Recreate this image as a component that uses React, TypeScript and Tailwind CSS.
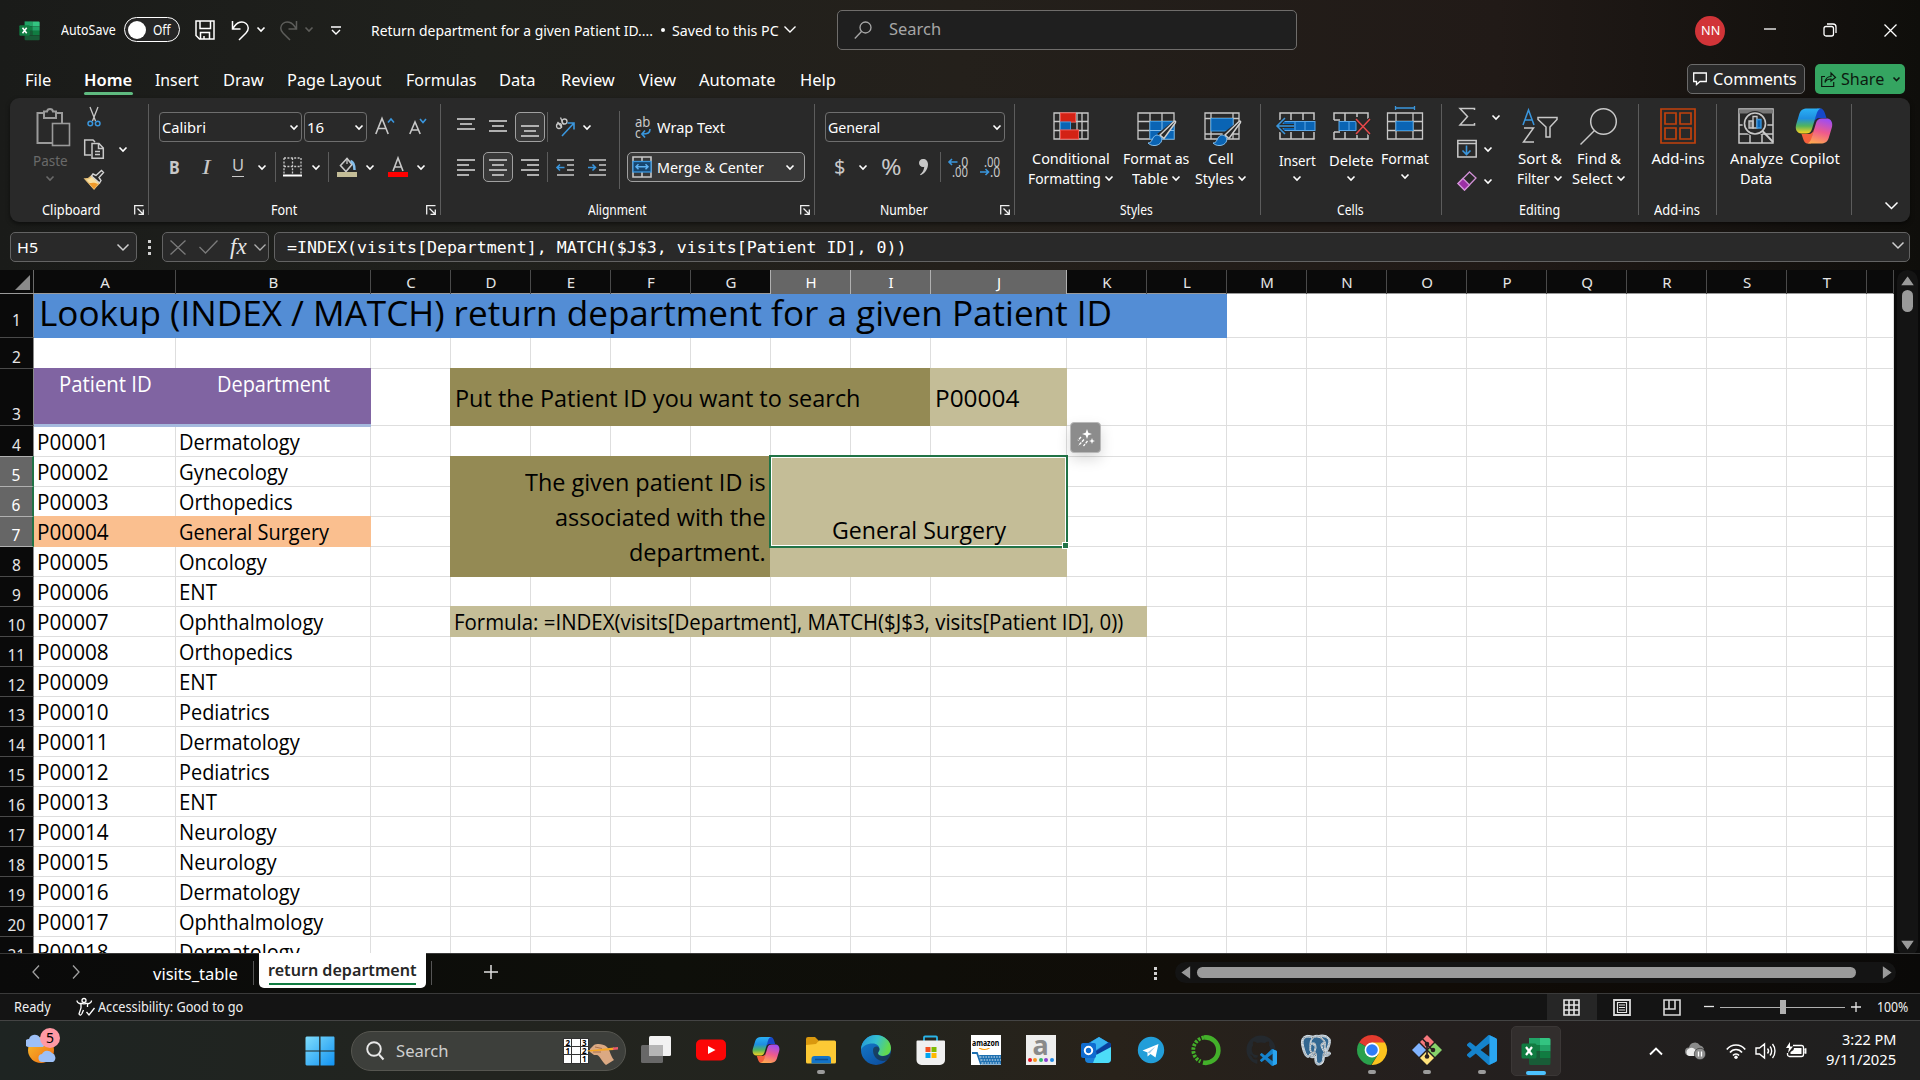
import React, { useLayoutEffect, useRef, useState } from "react";
import { BiLogoPostgresql } from "react-icons/bi";
import { FaGithub } from "react-icons/fa";

/* Text set to an exact advance width, condensed or expanded as needed. */
function Fit({ w, className = "", children }: { w: number; className?: string; children: React.ReactNode }) {
  const ref = useRef<HTMLSpanElement>(null);
  const [s, setS] = useState(1);
  useLayoutEffect(() => {
    const n = ref.current?.offsetWidth;
    if (n) setS(w / n);
  }, [w]);
  return (
    <span className={"block shrink-0 whitespace-nowrap " + className} style={{ width: w }}>
      <span ref={ref} className="inline-block origin-left" style={{ transform: `scaleX(${s})` }}>
        {children}
      </span>
    </span>
  );
}

type SvgProps = { w: number; h: number; className?: string; children: React.ReactNode };
function Ic({ w, h, className = "", children }: SvgProps) {
  return (
    <svg width={w} height={h} viewBox={`0 0 ${w} ${h}`} fill="none" stroke="#c8c8c8" strokeWidth="1.3" className={"block shrink-0 overflow-visible " + className}>
      {children}
    </svg>
  );
}

function Chev({ className = "", w = 8, stroke = "#ffffff", sw = 1.6 }: { className?: string; w?: number; stroke?: string; sw?: number }) {
  return (
    <Ic w={w} h={w / 2 + 1} className={className}>
      <path d={`M.5 .5 L${w / 2} ${w / 2} L${w - 0.5} .5`} stroke={stroke} strokeWidth={sw} />
    </Ic>
  );
}

function ExcelLogo({ size, className = "" }: { size: number; className?: string }) {
  return (
    <svg width={size} height={size} viewBox="0 0 30 30" className={"block shrink-0 " + className}>
      <path d="M8 2h11v7H8z" fill="#21a366" />
      <path d="M19 2h9a1.5 1.5 0 0 1 1.5 1.5V9H19z" fill="#33c481" />
      <path d="M8 9h11v6.500H8z" fill="#107c41" />
      <path d="M19 9h10.500v6.500H19z" fill="#21a366" />
      <path d="M8 15.500h11V22H8z" fill="#185c37" />
      <path d="M19 15.500h10.500V22H19z" fill="#107c41" />
      <path d="M8 22h21.500v5.500A1.500 1.500 0 0 1 28 29H9.500A1.500 1.500 0 0 1 8 27.500z" fill="#185c37" />
      <rect x="0.500" y="7.500" width="15" height="15" rx="1.500" fill="#107c41" />
      <path d="M5 11l6 8M11 11l-6 8" stroke="#fff" strokeWidth="2.200" />
    </svg>
  );
}

function CopilotLogo({ size, id }: { size: number; id: string }) {
  return (
    <svg width={size} height={size} viewBox="0 0 38 38" className="block shrink-0">
      <defs>
        <linearGradient id={id + "a"} x1="0" y1="0" x2="0" y2="1">
          <stop offset="0" stopColor="#2ab0f5" />
          <stop offset="0.400" stopColor="#1f8fe0" />
          <stop offset="0.700" stopColor="#52b45c" />
          <stop offset="1" stopColor="#ffd21f" />
        </linearGradient>
        <linearGradient id={id + "b"} x1="0.600" y1="0" x2="0.300" y2="1">
          <stop offset="0" stopColor="#a04df0" />
          <stop offset="0.500" stopColor="#ef5a8c" />
          <stop offset="1" stopColor="#ffa850" />
        </linearGradient>
      </defs>
      <path d="M22 1.500h3c3 0 4 2 5 5l1.500 4.500h-7c-3 0-4.500 1.500-5.500 5z" fill="#1648c8" />
      <path d="M16 36.500h-3c-3 0-4-2-5-5L6.500 27h7c3 0 4.500-1.500 5.500-5z" fill="#f4603c" />
      <path d="M12.500 1.500H27c-3 0-4.500 2-5.500 5.500l-4.500 15c-1 3-2.500 4.500-6 4.500H6.500C1.500 26.500-.2 22 1.300 17l3-10C5.500 3.200 8 1.500 12.500 1.500z" fill={`url(#${id}a)`} />
      <path d="M25.500 36.500H11c3 0 4.500-2 5.500-5.500l4.500-15c1-3 2.500-4.500 6-4.500h4.500c5 0 6.700 4.500 5.200 9.500l-3 10c-1.200 3.800-3.700 5.500-8.200 5.500z" fill={`url(#${id}b)`} />
    </svg>
  );
}

function TitleBar() {
  return (
    <div className="flex h-[60px] w-full shrink-0 items-center pt-px text-[14.5px] leading-[20px]">
      <ExcelLogo size={21} className="ml-[19px]" />
      <Fit w={55} className="-mt-[2px] ml-[21px] text-[14px]">AutoSave</Fit>
      <div className="-mt-[2px] ml-[8px] flex h-[25px] w-[56px] items-center rounded-full border border-white bg-[#262626]">
        <div className="ml-[3px] size-[18px] rounded-full bg-white" />
        <Fit w={18} className="ml-[7px] text-[14px]">Off</Fit>
      </div>
      <Ic w={20} h={20} className="-mt-px ml-[15px]">
        <path d="M1 1h18v18H4.500L1 15.500zM5 1v7.500h10.500V1M5.500 19v-6.500h9V19M9 19v-3" stroke="#fff" strokeWidth="1.500" />
      </Ic>
      <Ic w={19} h={21} className="-mt-px ml-[16px]">
        <path d="M1.500 1v8h8M2 8.500C6 1 12 1 15 3.500c3 2.500 3 6.500 0 9.500l-7 7" stroke="#fff" strokeWidth="1.500" />
      </Ic>
      <Chev className="-mt-[2px] ml-[7px]" w={8} />
      <Ic w={19} h={21} className="-mt-px ml-[14px]">
        <path d="M17.500 1v8h-8M17 8.500C13 1 7 1 4 3.500c-3 2.500-3 6.500 0 9.500l7 7" stroke="#5d5d5a" strokeWidth="1.500" />
      </Ic>
      <Chev className="-mt-[2px] ml-[7px]" w={8} stroke="#5d5d5a" />
      <Ic w={10} h={9} className="ml-[18px]">
        <path d="M0 1h10M1 4l4 4 4-4" stroke="#fff" strokeWidth="1.400" />
      </Ic>
      <Fit w={282} className="-mt-[2px] ml-[30px]">Return department for a given Patient ID....</Fit>
      <span className="-mt-px ml-[8px] size-[4px] rounded-full bg-white" />
      <Fit w={107} className="-mt-[2px] ml-[7px]">Saved to this PC</Fit>
      <Chev className="-mt-[2px] ml-[5px]" w={12} sw={1.4} />
      <div className="-mt-px ml-[41px] flex h-[40px] w-[460px] items-center rounded-[5px] border border-[#6f6d6b] bg-[#1f1f1f]">
        <Ic w={18} h={18} className="-mt-px ml-[16px]">
          <circle cx="11.500" cy="6.500" r="5.500" stroke="#a8a8a8" />
          <path d="M7.500 10.500L.8 17.500" stroke="#a8a8a8" />
        </Ic>
        <Fit w={52} className="-mt-[2px] ml-[17px] text-[15.500px] text-[#a6a6a6]">Search</Fit>
      </div>
      <div className="ml-[398px] flex size-[30px] items-center justify-center rounded-full bg-[#d13438]">
        <Fit w={19} className="text-[12px] leading-[16px]">NN</Fit>
      </div>
      <Ic w={12} h={2} className="-mt-[3px] ml-[39px]"><path d="M0 1h12" stroke="#fff" /></Ic>
      <Ic w={14} h={14} className="-mt-px ml-[47px]">
        <rect x="1" y="3.500" width="9.500" height="9.500" rx="2" stroke="#fff" />
        <path d="M4 1h6a3 3 0 0 1 3 3v6" stroke="#fff" />
      </Ic>
      <Ic w={13} h={13} className="-mt-px ml-[47px]"><path d="M.5.5l12 12M12.500.5l-12 12" stroke="#fff" /></Ic>
    </div>
  );
}

function MenuBar() {
  return (
    <div className="flex h-[38px] w-full shrink-0 items-start text-[16.500px] leading-[40px]">
      <Fit w={26} className="ml-[25px]">File</Fit>
      <div className="ml-[33px] h-[38px]">
        <Fit w={48} className="h-[32px] font-semibold">Home</Fit>
        <div className="h-[3px] w-[49px] rounded-full bg-[#5fbb80]" />
      </div>
      <Fit w={44} className="ml-[22px]">Insert</Fit>
      <Fit w={41} className="ml-[24px]">Draw</Fit>
      <Fit w={94} className="ml-[23px]">Page Layout</Fit>
      <Fit w={70} className="ml-[25px]">Formulas</Fit>
      <Fit w={37} className="ml-[23px]">Data</Fit>
      <Fit w={54} className="ml-[25px]">Review</Fit>
      <Fit w={37} className="ml-[24px]">View</Fit>
      <Fit w={77} className="ml-[23px]">Automate</Fit>
      <Fit w={36} className="ml-[24px]">Help</Fit>
      <div className="ml-[851px] mt-[4px] flex h-[30px] w-[118px] items-center rounded-[5px] border border-[#6b6b6b] bg-[#292929] leading-[28px]">
        <Ic w={14} h={14} className="ml-[5px] mt-[-1px]"><path d="M.7 1h12.600v8.500H7l-3.500 3v-3H.7z" stroke="#fff" /></Ic>
        <Fit w={84} className="ml-[6px]">Comments</Fit>
      </div>
      <div className="ml-[10px] mt-[4px] flex h-[30px] w-[90px] items-center rounded-[5px] bg-[#35a561] leading-[28px] text-[#0c1a10]">
        <Ic w={15} h={15} className="ml-[6px]">
          <path d="M4 4.500H.7v10h12V10M4 10.500c.5-4 3-6 6-6V1l4.500 4.500L10 9V7c-3 0-5 1-6 3.500z" stroke="#0c1a10" strokeWidth="1.200" />
        </Ic>
        <Fit w={43} className="ml-[5px]">Share</Fit>
        <Chev className="ml-[9px]" w={7} stroke="#0c1a10" />
      </div>
    </div>
  );
}

const Sep = () => <div className="mt-[6px] h-[111px] w-px shrink-0 bg-[#5c5c5c]" />;
const SmallSep = () => <div className="h-[30px] w-px shrink-0 bg-[#5c5c5c]" />;

function Launcher({ className = "" }: { className?: string }) {
  return (
    <Ic w={10} h={10} className={className}>
      <path d="M.7 9.500V.7H9.500M3.500 3.500l5.500 5.500M9.300 4.500v4.800H4.500" stroke="#f0f0f0" strokeWidth="1.300" />
    </Ic>
  );
}

function GroupShell({ className, label, children }: { className: string; label: React.ReactNode; children: React.ReactNode }) {
  return (
    <div className={"flex h-[124px] shrink-0 flex-col " + className}>
      <div className="flex h-[100px] w-full">{children}</div>
      <div className="flex h-[24px] w-full items-center text-[13.500px] leading-[22px]">{label}</div>
    </div>
  );
}

function Clipboard() {
  return (
    <GroupShell className="w-[138px]" label={<><Fit w={58} className="ml-[32px]">Clipboard</Fit><Launcher className="ml-[34px]" /></>}>
      <div className="flex w-[80px] shrink-0 flex-col items-center pt-[10px]">
        <Ic w={34} h={38} className="ml-[6px]">
          <path d="M8 5H1.500v30H16M19 5h7v10M8 3.500h3c.5-3.500 5.500-3.500 6 0h3V10H8z" stroke="#9a9a9a" strokeWidth="2" />
          <rect x="16.500" y="15.500" width="17" height="22" stroke="#9a9a9a" strokeWidth="1.600" />
        </Ic>
        <Fit w={35} className="mt-[4px] text-[15px] leading-[20px] text-[#6a6a6a]">Paste</Fit>
        <Chev w={8} stroke="#6a6a6a" className="mt-[6px]" />
      </div>
      <div className="ml-[-6px] flex w-[20px] shrink-0 flex-col pt-[9px]">
        <Ic w={20} h={20}>
          <path d="M6 0l5.500 14M14 0L8.500 14" />
          <circle cx="6.300" cy="16.500" r="2.300" stroke="#3a96dd" strokeWidth="1.500" />
          <circle cx="13.700" cy="16.500" r="2.300" stroke="#3a96dd" strokeWidth="1.500" />
        </Ic>
        <Ic w={20} h={20} className="mt-[12px]">
          <path d="M7 16H.7V1H9l2 2M8 19.300V4.500h7l4.300 4.500v10.300zM14.500 4.500V9.500h5M11 12.500h5M11 15.500h5" strokeWidth="1.500" />
        </Ic>
        <Ic w={20} h={20} className="mt-[11px]">
          <path d="M1 9c2.500 0 5-1 6.500-3l8 7c-2 2-4 4-5.500 6z" fill="#f9e0a0" stroke="#e9c27a" />
          <path d="M5 13c3 0 5-1 9 1l-4 5z" fill="#f09a2a" stroke="none" />
          <path d="M7.500 6l1.500-2 3 1.500L17.500.500l2 2-4.500 5 2 3-1.500 2.500z" fill="#292929" stroke="#d5d5d5" strokeWidth="1.400" />
        </Ic>
      </div>
      <Chev className="ml-[15px] mt-[49px]" w={8} />
    </GroupShell>
  );
}

function FontGroup() {
  return (
    <GroupShell className="w-[291px]" label={<><Fit w={26} className="ml-[122px]">Font</Fit><Launcher className="ml-[129px]" /></>}>
      <div className="ml-[10px] flex flex-col gap-[10px] pt-[14px]">
        <div className="flex h-[30px] items-center text-[15px] leading-[20px]">
          <div className="flex h-[30px] w-[143px] items-center rounded-[4px] border border-[#6e6e6e]">
            <Fit w={44} className="ml-[2px]">Calibri</Fit>
            <Chev className="ml-auto mr-[3px]" w={8} />
          </div>
          <div className="ml-[2px] flex h-[30px] w-[63px] items-center rounded-[4px] border border-[#6e6e6e]">
            <Fit w={17} className="ml-[2px]">16</Fit>
            <Chev className="ml-auto mr-[3px]" w={8} />
          </div>
          <Ic w={19} h={18} className="ml-[8px] mt-[-3px]">
            <path d="M.8 17L7 1.500 13.200 17M3 11.500h8" strokeWidth="1.600" />
            <path d="M13 5.500L16 2l3 3.500" stroke="#3a96dd" strokeWidth="1.600" />
          </Ic>
          <Ic w={18} h={18} className="ml-[15px] mt-[-3px]">
            <path d="M.8 17L6 5l5.200 12M2.600 13h7" strokeWidth="1.600" />
            <path d="M11 2l3 3.500 3-3.500" stroke="#3a96dd" strokeWidth="1.600" />
          </Ic>
        </div>
        <div className="flex h-[30px] items-center text-[#c8c8c8]">
          <Fit w={11} className="-mt-px ml-[10px] text-[17.500px] font-bold leading-[26px]">B</Fit>
          <Fit w={9} className="-mt-px ml-[22px] font-['Liberation_Serif'] text-[20px] italic leading-[26px]">I</Fit>
          <div className="-mt-px ml-[21px] flex h-[20px] w-[12px] flex-col border-b-[1.500px] border-[#c8c8c8]">
            <Fit w={12} className="-mt-[2px] text-[16.500px] leading-[20px]">U</Fit>
          </div>
          <Chev className="ml-[14px]" w={8} />
          <div className="ml-[9px]"><SmallSep /></div>
          <Ic w={19} h={20} className="ml-[7px]">
            <path d="M1 1h17M1 1v16M18 1v16M9.500 1v16M1 9.500h17" strokeDasharray="2 1.400" />
            <path d="M0 18.500h19" stroke="#fff" strokeWidth="2" />
          </Ic>
          <Chev className="ml-[10px]" w={8} />
          <div className="ml-[8px]"><SmallSep /></div>
          <Ic w={20} h={20} className="ml-[8px]">
            <path d="M3.500 8.500L10 1.500l5 6-6 7z" strokeWidth="1.600" />
            <path d="M10 1v6" />
            <path d="M13.500 4c3 1 4 4 4 9" stroke="#83beec" strokeWidth="2.500" />
            <path d="M0 17.500h20" stroke="#c4bd97" strokeWidth="5" />
          </Ic>
          <Chev className="ml-[9px]" w={8} />
          <Ic w={20} h={20} className="ml-[14px]">
            <path d="M5 14L10 1l5 13M6.500 10h7" strokeWidth="1.600" />
            <path d="M0 17.500h20" stroke="#ff0000" strokeWidth="5" />
          </Ic>
          <Chev className="ml-[9px]" w={8} />
        </div>
      </div>
    </GroupShell>
  );
}

function Lines({ spans, gap }: { spans: [number, number][]; gap: number }) {
  return (
    <Ic w={18} h={(spans.length - 1) * gap + 2}>
      {spans.map(([a, b], i) => (
        <path key={i} d={`M${a} ${i * gap + 1}H${b}`} strokeWidth="1.700" />
      ))}
    </Ic>
  );
}

const pressed = "flex h-[30px] w-[30px] shrink-0 items-center justify-center rounded-[5px] border border-[#a0a0a0] bg-[#383838]";
function Alignment() {
  return (
    <GroupShell className="w-[373px]" label={<><Fit w={59} className="ml-[147px]">Alignment</Fit><Launcher className="ml-[153px]" /></>}>
      <div className="flex flex-col gap-[10px] pt-[14px]">
        <div className="flex h-[30px] w-[166px] items-center">
          <div className="ml-[16px] mt-[-6px]"><Lines gap={5} spans={[[0, 18], [3, 15], [0, 18]]} /></div>
          <div className="ml-[14px] mt-[-2px]"><Lines gap={5} spans={[[0, 18], [3, 15], [0, 18]]} /></div>
          <div className={pressed + " ml-[8px] pt-[8px]"}><Lines gap={5} spans={[[0, 18], [3, 15], [0, 18]]} /></div>
          <div className="ml-[2px]"><SmallSep /></div>
          <div className="ml-[7px] flex h-[20px] w-[20px]">
            <Ic w={20} h={20}>
              <circle cx="4" cy="9" r="2.500" />
              <path d="M2.500 5l4.500 5.500" />
              <circle cx="9.500" cy="4.500" r="2.500" />
              <path d="M5.500 .500l3 7" />
              <path d="M7 19L19 6M12.500 6H19v6.500" stroke="#3a96dd" strokeWidth="1.600" />
            </Ic>
          </div>
          <Chev className="ml-[8px]" w={8} />
        </div>
        <div className="flex h-[30px] w-[166px] items-center">
          <div className="ml-[16px]"><Lines gap={5} spans={[[0, 18], [0, 12], [0, 18], [0, 12]]} /></div>
          <div className={pressed + " ml-[8px]"}><Lines gap={5} spans={[[0, 18], [3, 15], [0, 18], [3, 15]]} /></div>
          <div className="ml-[8px]"><Lines gap={5} spans={[[0, 18], [6, 18], [0, 18], [6, 18]]} /></div>
          <div className="ml-[8px]"><SmallSep /></div>
          <Ic w={19} h={17} className="ml-[8px]">
            <path d="M1 1h17M11 6h7M11 11h7M1 16h17" strokeWidth="1.700" />
            <path d="M8.500 8.500H1M4 5.500l-3 3 3 3" stroke="#3a96dd" strokeWidth="1.600" />
          </Ic>
          <Ic w={19} h={17} className="ml-[13px]">
            <path d="M1 1h17M11 6h7M11 11h7M1 16h17" strokeWidth="1.700" />
            <path d="M0 8.500h7.500M4.500 5.500l3 3-3 3" stroke="#3a96dd" strokeWidth="1.600" />
          </Ic>
        </div>
      </div>
      <div className="ml-[12px] mt-[13px] h-[78px] w-px shrink-0 bg-[#5c5c5c]" />
      <div className="ml-[7px] flex flex-col gap-[10px] pt-[14px] text-[15px] leading-[20px]">
        <div className="flex h-[30px] items-center">
          <div className="ml-[8px] h-[22px] w-[17px] text-[14px] leading-[11px] text-[#c8c8c8]">
            <Fit w={15}>ab</Fit>
            <div className="flex">
              <Fit w={6}>c</Fit>
              <Ic w={10} h={10} className="mt-[2px]"><path d="M9 0c0 4-2 5-8 5M4 1.500L1 5l3 3.500" stroke="#3a96dd" strokeWidth="1.700" /></Ic>
            </div>
          </div>
          <Fit w={68} className="ml-[5px]">Wrap Text</Fit>
        </div>
        <div className="flex h-[30px] w-[178px] items-center rounded-[5px] border border-[#a0a0a0] bg-[#383838]">
          <Ic w={20} h={22} className="ml-[4px]">
            <path d="M1 1h18v20H1zM10 1v5M10 16v5" strokeWidth="1.600" />
            <rect x="1" y="5.500" width="18" height="10.500" fill="#17456e" stroke="#3a96dd" />
            <path d="M4 10.800h12M6.500 8.300L4 10.800l2.500 2.500M13.500 8.300l2.500 2.500-2.500 2.500" stroke="#5db0f0" strokeWidth="1.500" />
          </Ic>
          <Fit w={107} className="ml-[5px]">{"Merge & Center"}</Fit>
          <Chev className="ml-[22px]" w={8} />
        </div>
      </div>
    </GroupShell>
  );
}

function NumberGroup() {
  return (
    <GroupShell className="w-[199px]" label={<><Fit w={48} className="ml-[65px]">Number</Fit><Launcher className="ml-[72px]" /></>}>
      <div className="ml-[10px] flex flex-col gap-[10px] pt-[14px]">
        <div className="flex h-[30px] w-[180px] items-center rounded-[4px] border border-[#6e6e6e] text-[15px] leading-[20px]">
          <Fit w={52} className="ml-[2px]">General</Fit>
          <Chev className="ml-auto mr-[3px]" w={8} />
        </div>
        <div className="flex h-[30px] items-center leading-[26px] text-[#c8c8c8]">
          <Fit w={11} className="ml-[9px] text-[20px]">$</Fit>
          <Chev className="ml-[14px]" w={8} />
          <Fit w={20} className="ml-[14px] text-[21px]">%</Fit>
          <Ic w={9} h={17} className="ml-[18px]">
            <path d="M4 0C1.500 0 0 1.700 0 4s1.700 4 4 4c.6 0 1-.1 1.300-.3C5 11 3.500 13.500 1 15.500l.8.800C6.500 14 9 9.500 9 5.500 9 2 7 0 4 0z" fill="#c8c8c8" stroke="none" />
          </Ic>
          <div className="ml-[12px]"><SmallSep /></div>
          <div className="ml-[7px] flex w-[20px] flex-col text-[13.500px] leading-[10px]">
            <div className="flex items-center">
              <Ic w={10} h={8}><path d="M9.500 4H1M4 1L1 4l3 3" stroke="#3a96dd" strokeWidth="1.600" /></Ic>
              <Fit w={10}>.0</Fit>
            </div>
            <Fit w={16} className="ml-[4px]">.00</Fit>
          </div>
          <div className="ml-[12px] flex w-[20px] flex-col text-[13.500px] leading-[10px]">
            <Fit w={16} className="ml-[4px]">.00</Fit>
            <div className="flex items-center">
              <Ic w={10} h={8}><path d="M0 4h8.500M5.500 1l3 3-3 3" stroke="#3a96dd" strokeWidth="1.600" /></Ic>
              <Fit w={10}>.0</Fit>
            </div>
          </div>
        </div>
      </div>
    </GroupShell>
  );
}

type BigProps = { className: string; icon: React.ReactNode; lines: { t: string; w: number }[]; chev?: "inline" | "below"; shift?: boolean };
/* Large ribbon button: icon area above one or two lines of caption. */
function Big({ className, icon, lines, chev, shift }: BigProps) {
  return (
    <div className={"flex shrink-0 flex-col items-center text-[15px] leading-[20px] " + className}>
      <div className={shift ? "h-[52px] w-[40px]" : "h-[50px] w-[40px]"}>{icon}</div>
      {lines.map((l, i) => (
        <div key={l.t} className="flex shrink-0 items-center">
          <Fit w={l.w}>{l.t}</Fit>
          {chev === "inline" && i === lines.length - 1 && <Chev className="ml-[4px] mr-px" w={8} />}
        </div>
      ))}
      {chev === "below" && <Chev className="mt-[6px]" w={8} />}
    </div>
  );
}

const GRID = "M2 15h36v26H2zM2 23.500h36M2 32.500h36M14 15v26M26 15v26";
const Brush = () => (
  <>
    <path d="M21 36L37.500 23l2 1.500L28 41z" fill="#292929" stroke="none" />
    <path d="M24 37L38 23.500c1-1 2.200 0 1.300 1.300L28 40.500z" fill="#292929" stroke="#d0d0d0" strokeWidth="1.500" />
    <path d="M12 45c3 0 3.500-2 5-5s5-4 8-1c2 3 0 8-6 8.500-3 .200-5.500-.800-7-2.500z" fill="#0a64b4" stroke="#83beec" strokeWidth="1" />
  </>
);

function StylesGroup() {
  return (
    <GroupShell className="w-[245px]" label={<Fit w={33} className="ml-[105px]">Styles</Fit>}>
      <Big className="w-[112px]" chev="inline" lines={[{ t: "Conditional", w: 78 }, { t: "Formatting", w: 73 }]} icon={
        <Ic w={40} h={51}>
          <path d="M3 15h34v26H3zM3 23.500h34M3 32.500h34M9 15v26M26 15v26M31 15v26" />
          <rect x="9.500" y="15" width="15" height="9" fill="#d32215" stroke="#f0504a" strokeWidth="1" />
          <rect x="9.500" y="24" width="10" height="8" fill="#0a64b4" stroke="#3a96dd" strokeWidth="1" />
          <rect x="9.500" y="32" width="18" height="9" fill="#d32215" stroke="#f0504a" strokeWidth="1" />
        </Ic>} />
      <Big className="w-[58px]" chev="inline" lines={[{ t: "Format as", w: 66 }, { t: "Table", w: 36 }]} icon={
        <Ic w={40} h={51}>
          <path d={GRID} />
          <path d="M14 23.500h24V41H14z" fill="#0a64b4" stroke="#3a96dd" strokeWidth="1" />
          <path d="M14 32.500h24M26 23.500V41" stroke="#83beec" strokeWidth="1" />
          <Brush />
        </Ic>} />
      <Big className="w-[72px]" chev="inline" lines={[{ t: "Cell", w: 26 }, { t: "Styles", w: 39 }]} icon={
        <Ic w={40} h={51}>
          <path d="M4 15h34v26H4zM4 20.500h34M4 36h34M10 15v26M32 15v26" />
          <path d="M10 20.500h22V33H10z" fill="#0a64b4" stroke="#3a96dd" strokeWidth="1" />
          <Brush />
        </Ic>} />
    </GroupShell>
  );
}

function Cells() {
  return (
    <GroupShell className="w-[180px]" label={<Fit w={27} className="ml-[76px]">Cells</Fit>}>
      <Big className="w-[72px]" chev="below" shift lines={[{ t: "Insert", w: 37 }]} icon={
        <Ic w={40} h={51}>
          <path d="M3 22V15h34v7M3 34v7h34v-7M14 15v7M26 15v7M14 34v7M26 34v7" strokeWidth="1.500" />
          <rect x="6" y="23.500" width="32" height="9" fill="#0a64b4" stroke="#5aa7e8" strokeWidth="1" />
          <path d="M18 24v8M28 24v8" stroke="#5aa7e8" strokeWidth="1" />
          <path d="M0 28h17M8 20l-8 8 8 8" stroke="#292929" strokeWidth="4" />
          <path d="M0 28h17M8 20l-8 8 8 8" stroke="#3a96dd" strokeWidth="1.500" />
        </Ic>} />
      <Big className="w-[36px]" chev="below" shift lines={[{ t: "Delete", w: 45 }]} icon={
        <Ic w={40} h={51}>
          <path d="M3 22V15h34v6M3 34v7h34v-6M3 22h6M3 34h6M14 15v8M26 15v4M14 34v7M26 37v4" strokeWidth="1.500" />
          <rect x="8" y="23.500" width="17" height="9" fill="#0a64b4" stroke="#5aa7e8" strokeWidth="1" />
          <path d="M18 24v8" stroke="#5aa7e8" strokeWidth="1" />
          <path d="M25 21l14 15M39 21L25 36" stroke="#292929" strokeWidth="4" />
          <path d="M25 21l14 15M39 21L25 36" stroke="#e8484a" strokeWidth="1.500" />
        </Ic>} />
      <Big className="w-[72px]" chev="below" lines={[{ t: "Format", w: 48 }]} icon={
        <Ic w={40} h={51}>
          <path d="M2.500 15h35v26h-35zM2.500 23.500h35M2.500 32.500h35M11 15v26M28 15v26" />
          <rect x="11" y="23.500" width="17" height="9" fill="#0a64b4" stroke="#3a96dd" strokeWidth="1" />
          <path d="M10 10h20M10.500 8v4M29.500 8v4" stroke="#3a96dd" />
        </Ic>} />
    </GroupShell>
  );
}

function Editing() {
  return (
    <GroupShell className="w-[196px]" label={<Fit w={41} className="ml-[77px]">Editing</Fit>}>
      <div className="flex w-[68px] shrink-0 flex-col pl-[15px] pt-[9px]">
        <div className="flex items-center">
          <Ic w={20} h={20}><path d="M17.500 3V1.500H3l7.500 8-7.500 8.500h14.500v-2" strokeWidth="1.500" /></Ic>
          <Chev className="ml-[15px]" w={8} />
        </div>
        <div className="mt-[12px] flex items-center">
          <Ic w={20} h={20}>
            <path d="M.8 1.500h18.400v16.500H.8zM.8 4.500h18.400" strokeWidth="1.500" />
            <path d="M9.500 6.500v9M5.500 11.500l4 4 4-4" stroke="#3a96dd" strokeWidth="1.600" />
          </Ic>
          <Chev className="ml-[7px]" w={8} />
        </div>
        <div className="mt-[12px] flex items-center">
          <Ic w={20} h={20}>
            <path d="M12.500 1l6.500 6-11.500 12L1 12.500z" stroke="#d190d6" />
            <path d="M6 7.500L1 12.500l6.500 6.500L12.500 14z" fill="#9b2fa5" stroke="#d190d6" />
          </Ic>
          <Chev className="ml-[7px]" w={8} />
        </div>
      </div>
      <Big className="w-[60px]" chev="inline" lines={[{ t: "Sort &", w: 44 }, { t: "Filter", w: 33 }]} icon={
        <Ic w={40} h={51}>
          <path d="M3 27L8.500 12 14 27M5 22h7" stroke="#3a96dd" strokeWidth="1.500" />
          <path d="M4 30h9.500L3.500 44h10.500M18 19.500h19v2l-7 7.500v10h-4v-10l-8-7.500z" strokeWidth="1.500" />
        </Ic>} />
      <Big className="w-[58px]" chev="inline" lines={[{ t: "Find &", w: 44 }, { t: "Select", w: 41 }]} icon={
        <Ic w={40} h={51}>
          <circle cx="24.500" cy="23.500" r="12.800" strokeWidth="1.500" />
          <path d="M15.500 32.500L1.500 46.500" strokeWidth="1.500" />
        </Ic>} />
    </GroupShell>
  );
}

function Ribbon() {
  return (
    <div className="ml-[10px] flex h-[124px] w-[1900px] shrink-0 rounded-[9px] bg-[#292929] shadow-[0_2px_4px_rgba(0,0,0,0.5)]">
      <Clipboard />
      <Sep />
      <FontGroup />
      <Sep />
      <Alignment />
      <Sep />
      <NumberGroup />
      <Sep />
      <StylesGroup />
      <Sep />
      <Cells />
      <Sep />
      <Editing />
      <Sep />
      <GroupShell className="w-[77px]" label={<Fit w={46} className="ml-[15px]">Add-ins</Fit>}>
        <Big className="w-[78px]" lines={[{ t: "Add-ins", w: 53 }]} icon={
          <Ic w={40} h={51}>
            <path d="M3 11h34v34H3zM7 15h11v11H7zM22 15h11v11H22zM7 30h11v11H7zM22 30h11v11H22z" stroke="#c2410c" strokeWidth="1.700" />
          </Ic>} />
      </GroupShell>
      <Sep />
      <GroupShell className="w-[134px]" label={null}>
        <Big className="w-[78px]" lines={[{ t: "Analyze", w: 53 }, { t: "Data", w: 32 }]} icon={
          <Ic w={40} h={51}>
            <path d="M3 11h34v34H3zM3 27h6M3 36h34M31 27h6M14 36v9M26 36v9" strokeWidth="1.500" />
            <path d="M3 13.500h34" stroke="#777" strokeWidth="4" />
            <circle cx="19" cy="25.500" r="12.500" fill="#292929" stroke="none" />
            <circle cx="19" cy="25.500" r="10.500" strokeWidth="1.600" />
            <path d="M26.500 33L37 44" strokeWidth="2" />
            <path d="M13 23h4v7h-4z" fill="#777" />
            <path d="M17 18.500h4V30h-4z" />
            <path d="M21 21.500h4V30h-4z" fill="#0a64b4" stroke="#3a96dd" />
          </Ic>} />
        <Big className="w-[40px]" lines={[{ t: "Copilot", w: 50 }]} icon={<div className="pt-[9px]"><CopilotLogo size={38} id="ribbonCopilot" /></div>} />
      </GroupShell>
      <Sep />
      <Chev className="ml-[33px] mt-[104px]" w={13} sw={1.5} />
    </div>
  );
}

function FormulaBar() {
  return (
    <div className="flex h-[48px] w-full shrink-0 items-start pt-[10px]">
      <div className="ml-[10px] flex h-[30px] w-[127px] items-center rounded-[5px] border border-[#636363] bg-[#292929]">
        <Fit w={21} className="ml-[6px] text-[14.500px] leading-[20px]">H5</Fit>
        <Chev className="ml-auto mr-[7px]" w={12} sw={1.5} stroke="#cfcfcf" />
      </div>
      <div className="ml-[11px] flex h-[30px] w-[3px] flex-col items-center justify-center gap-[3px]">
        <span className="size-[3px] bg-[#d0d0d0]" />
        <span className="size-[3px] bg-[#d0d0d0]" />
        <span className="size-[3px] bg-[#d0d0d0]" />
      </div>
      <div className="ml-[11px] flex h-[30px] w-[107px] items-center rounded-[5px] border border-[#636363] bg-[#292929]">
        <Ic w={16} h={15} className="ml-[7px]"><path d="M.5.500l15 14M15.500.500l-15 14" stroke="#7b7b7b" /></Ic>
        <Ic w={19} h={14} className="ml-[13px]"><path d="M.5 7l6 6L18.500.500" stroke="#7b7b7b" /></Ic>
        <Fit w={17} className="ml-[12px] font-['Liberation_Serif'] text-[23px] italic leading-[24px] text-[#e6e6e6]">fx</Fit>
        <Chev className="ml-[7px]" w={12} sw={1.300} stroke="#b0b0b0" />
      </div>
      <div className="ml-[5px] flex h-[30px] w-[1636px] items-center rounded-[5px] border border-[#636363] bg-[#292929]">
        <Fit w={620} className="ml-[12px] mt-[2px] font-['DejaVu_Sans_Mono'] text-[15.500px] leading-[20px]">=INDEX(visits[Department], MATCH($J$3, visits[Patient ID], 0))</Fit>
        <Chev className="-mt-[3px] ml-auto mr-[5px]" w={12} sw={1.500} stroke="#cfcfcf" />
      </div>
    </div>
  );
}

const COLS = "ABCDEFGHIJKLMNOPQRSTU".split("");
const COL_W = "grid-cols-[142px_195px_repeat(7,80px)_136px_repeat(10,80px)_27px]";
const ROWS = Array.from({ length: 21 }, (_, i) => i + 1);
const ROW_H = "grid-rows-[44px_31px_57px_31px_repeat(17,30px)]";

const DEPTS: [string, number][] = [
  ["Dermatology", 121], ["Gynecology", 109], ["Orthopedics", 114], ["General Surgery", 150], ["Oncology", 88],
  ["ENT", 38], ["Ophthalmology", 144], ["Orthopedics", 114], ["ENT", 38], ["Pediatrics", 91], ["Dermatology", 121],
  ["Pediatrics", 91], ["ENT", 38], ["Neurology", 98], ["Neurology", 98], ["Dermatology", 121], ["Ophthalmology", 144], ["Dermatology", 121],
];

function Sheet() {
  return (
    <div className="flex h-[683px] w-full shrink-0 bg-[#0a0a0a]">
      <div className="flex h-[683px] w-[1894px] shrink-0 flex-col overflow-hidden">
        <div className="flex h-[24px] shrink-0 border-b border-[#9a9a9a]">
          <div className="flex h-[23px] w-[34px] shrink-0 items-end justify-end border-r border-[#6a6a6a] pb-[3px] pr-[3px]">
            <Ic w={15} h={15}><path d="M15 0v15H0z" fill="#8a8a8a" stroke="none" /></Ic>
          </div>
          <div className={"grid h-[24px] " + COL_W}>
            {COLS.map((c) => {
              const sel = c === "H" || c === "I" || c === "J";
              return (
                <div
                  key={c}
                  className={
                    sel
                      ? "-ml-px flex justify-center border-x border-b-2 border-x-[#b0b0b0] border-b-[#217346] bg-[#666666] pl-px text-[15px] leading-[24px] text-white"
                      : "flex justify-center border-r border-[#4a4a4a] pl-px text-[15px] leading-[24px] text-[#e6e6e6]"
                  }
                >
                  {c === "U" ? "" : c}
                </div>
              );
            })}
          </div>
        </div>
        <div className="flex h-[659px] overflow-hidden">
          <div className={"grid w-[34px] shrink-0 " + ROW_H}>
            {ROWS.map((r) => {
              const sel = r >= 5 && r <= 7;
              return (
                <div
                  key={r}
                  className={
                    (sel
                      ? "-mt-px flex items-end justify-center border-y border-r-2 border-y-[#b0b0b0] border-r-[#217346] bg-[#666666] text-white "
                      : "flex items-end justify-center border-b border-r border-b-[#4a4a4a] border-r-[#8a8a8a] text-[#e6e6e6] ") +
                    (r === 1 ? "pb-[6px]" : "")
                  }
                >
                  <Fit w={r > 9 ? 18 : 9} className="text-[15.500px] leading-[22px]">{r}</Fit>
                </div>
              );
            })}
          </div>
          <div className={"grid w-[1860px] shrink-0 bg-white font-['Open_Sans'] text-[21px] leading-[26px] text-black " + COL_W + " " + ROW_H}>
            {ROWS.map((r) =>
              COLS.map((c, i) => <div key={c + r} className="border-b border-r border-[#dedede]" style={{ gridRow: r, gridColumn: i + 1 }} />)
            )}
            <div className="col-[1/13] row-[1/2] bg-[#538dd5] pl-[5px] text-[34.600px] leading-[38px]">
              <Fit w={1073}>Lookup (INDEX / MATCH) return department for a given Patient ID</Fit>
            </div>
            <div className="col-[1/3] row-[3/4] -mb-px -mt-px flex border-b-[3px] border-[#a5b9de] bg-[#8064a2] pt-[3px] text-white">
              <Fit w={93} className="ml-[25px]">Patient ID</Fit>
              <Fit w={113} className="ml-[65px]">Department</Fit>
            </div>
            <div className="col-[1/3] row-[7/8] -mt-px bg-[#fabf8f]" />
            {DEPTS.map(([d, w], i) => (
              <React.Fragment key={i}>
                <div className={i === 0 ? "col-[1/2] pl-[3px] pt-[3px]" : "col-[1/2] pl-[3px] pt-[2px]"} style={{ gridRow: i + 4 }}>
                  <Fit w={72}>{"P" + String(i + 1).padStart(5, "0")}</Fit>
                </div>
                <div className={i === 0 ? "col-[2/3] pl-[3px] pt-[3px]" : "col-[2/3] pl-[3px] pt-[2px]"} style={{ gridRow: i + 4 }}>
                  <Fit w={w}>{d}</Fit>
                </div>
              </React.Fragment>
            ))}
            <div className="col-[4/10] row-[3/4] -ml-px -mt-px flex items-center bg-[#948a54] text-[23.800px] leading-[34px]">
              <Fit w={406} className="ml-[5px] mt-[2px]">Put the Patient ID you want to search</Fit>
            </div>
            <div className="col-[10/11] row-[3/4] -ml-px -mt-px flex items-center bg-[#c4bd97] text-[23.800px] leading-[34px]">
              <Fit w={84} className="ml-[5px] mt-[2px]">P00004</Fit>
            </div>
            <div className="col-[4/8] row-[5/9] -ml-px -mt-px flex flex-col items-end bg-[#948a54] pr-[5px] pt-[9px] text-[23.800px] leading-[35px]">
              <Fit w={241}>The given patient ID is</Fit>
              <Fit w={211}>associated with the</Fit>
              <Fit w={137}>department.</Fit>
            </div>
            <div className="col-[8/11] row-[5/9] -ml-px -mt-px bg-[#c4bd97]" />
            <div className="relative col-[8/11] row-[5/8] -mb-px -ml-[2px] -mr-px -mt-[2px] flex items-end justify-center border-2 border-[#217346] text-[23.800px] leading-[34px] shadow-[inset_0_0_0_1px_#ffffff]">
              <Fit w={174} className="mb-[-1px]">General Surgery</Fit>
              <div className="absolute -bottom-[3px] -right-[3px] size-[7px] border border-white bg-[#217346]" />
              <div className="absolute -top-[35px] left-[299px] flex h-[31px] w-[31px] items-center justify-center rounded-[4px] border border-[#b8b8b8] bg-[#8c8c8c] shadow-[0_6px_14px_rgba(0,0,0,0.15)]">
                <Ic w={18} h={18}>
                  <path d="M10 0l1.300 3.700L15 5l-3.700 1.300L10 10 8.700 6.300 5 5l3.700-1.300zM15 9l.8 2.200L18 12l-2.200.8L15 15l-.8-2.200L12 12l2.200-.8z" fill="#fff" stroke="none" />
                  <path d="M4 8L1 11.500M7 10.500l-5.500 6M10.500 12l-4 5" stroke="#fff" strokeDasharray="3 1" />
                </Ic>
              </div>
            </div>
            <div className="col-[4/12] row-[10/11] -ml-px -mt-px bg-[#c4bd97] pl-[4px] pt-[3px]">
              <Fit w={669}>Formula: =INDEX(visits[Department], MATCH($J$3, visits[Patient ID], 0))</Fit>
            </div>
          </div>
        </div>
      </div>
      <div className="ml-[3px] flex h-[686px] w-[21px] flex-col items-center rounded-full bg-[#141414]">
        <Ic w={11} h={8} className="mt-[7px]"><path d="M5.500.500L10.500 7.500H.500z" fill="#9a9a9a" stroke="#9a9a9a" /></Ic>
        <div className="mt-[5px] h-[22px] w-[11px] rounded-full bg-[#9a9a9a]" />
        <Ic w={11} h={8} className="mb-[7px] mt-auto"><path d="M5.500 7.500L10.500.500H.500z" fill="#9a9a9a" stroke="#9a9a9a" /></Ic>
      </div>
    </div>
  );
}

function SheetTabs() {
  return (
    <div className="flex h-[41px] w-full shrink-0 items-start border-b border-t border-[#3a3a3a] bg-[linear-gradient(90deg,#0a0a0a_0%,#0e0f0a_35%,#110c07_75%,#0a0908_100%)]">
      <Ic w={8} h={14} className="ml-[32px] mt-[11px]"><path d="M7 .500L1 7l6 6.500" stroke="#a0a0a0" /></Ic>
      <Ic w={8} h={14} className="ml-[32px] mt-[11px]"><path d="M1 .500L7 7l-6 6.500" stroke="#a0a0a0" /></Ic>
      <Fit w={85} className="ml-[73px] mt-[9px] text-[16.500px] leading-[22px]">visits_table</Fit>
      <div className="ml-[15px] mt-[7px] h-[24px] w-px bg-[#555]" />
      <div className="-mt-px ml-[5px] flex h-[35px] w-[167px] flex-col items-center rounded-b-[5px] bg-white">
        <Fit w={149} className="h-[30px] text-[16px] font-semibold leading-[35px] text-[#262626]">return department</Fit>
        <div className="h-[2px] w-[147px] bg-[#107c41]" />
      </div>
      <div className="ml-[5px] mt-[7px] h-[24px] w-px bg-[#555]" />
      <Ic w={14} h={14} className="ml-[52px] mt-[11px]"><path d="M7 0v14M0 7h14" stroke="#e0e0e0" strokeWidth="1.500" /></Ic>
      <div className="ml-[656px] mt-[13px] flex flex-col gap-[2px]">
        <span className="size-[3px] bg-[#d0d0d0]" />
        <span className="size-[3px] bg-[#d0d0d0]" />
        <span className="size-[3px] bg-[#d0d0d0]" />
      </div>
      <div className="ml-[18px] mt-[8px] flex h-[21px] w-[721px] items-center rounded-full bg-[#141414]">
        <Ic w={8} h={11} className="ml-[7px]"><path d="M.500 5.500L7.500.500v10z" fill="#9a9a9a" stroke="#9a9a9a" /></Ic>
        <div className="ml-[7px] h-[11px] w-[659px] rounded-full bg-[#9a9a9a]" />
        <Ic w={8} h={11} className="ml-auto mr-[5px]"><path d="M7.500 5.500L.500.500v10z" fill="#9a9a9a" stroke="#9a9a9a" /></Ic>
      </div>
    </div>
  );
}

function StatusBar() {
  return (
    <div className="flex h-[26px] w-full shrink-0 items-center bg-[#141414] text-[13.500px] leading-[22px] text-[#f0f0f0]">
      <Fit w={37} className="ml-[14px]">Ready</Fit>
      <Ic w={19} h={18} className="ml-[25px]">
        <circle cx="8" cy="2.500" r="2" stroke="#fff" />
        <path d="M1 2.500c0 2 2 3 4 3.500v4l-2 6c1 2 2 1 3-.500l1.500-3.500M15.500 2.500c0 2-2 3-4 3.500v3M4.500 5c2 1 5 1 7 0M10.500 14l2.500 3 5.500-7" stroke="#fff" />
      </Ic>
      <Fit w={145} className="ml-[3px]">Accessibility: Good to go</Fit>
      <div className="ml-[1304px] flex h-[26px] w-[50px] items-center justify-center bg-[#262626]">
        <Ic w={17} h={17} className="-ml-px"><path d="M1 1h15v15H1zM1 6h15M1 11h15M6 1v15M11 1v15" stroke="#e6e6e6" strokeWidth="1.600" /></Ic>
      </div>
      <Ic w={18} h={17} className="ml-[16px]">
        <path d="M1 1h16v15H1z" stroke="#d8d8d8" strokeWidth="1.800" />
        <path d="M4.500 3.500h9v10h-9zM6 6h6M6 8.500h6M6 11h6" stroke="#e6e6e6" strokeWidth="1.200" />
      </Ic>
      <Ic w={18} h={17} className="ml-[32px]">
        <path d="M1 1h16v15H1zM6 1v9M1 10h11V1" stroke="#d8d8d8" strokeWidth="1.600" />
      </Ic>
      <Ic w={10} h={10} className="ml-[23px]"><path d="M0 4.500h10" stroke="#e6e6e6" /></Ic>
      <div className="ml-[6px] flex h-[14px] w-[125px] items-center">
        <div className="h-px w-[60px] bg-[#b0b0b0]" />
        <div className="h-[14px] w-[6px] bg-[#b0b0b0]" />
        <div className="h-px flex-1 bg-[#b0b0b0]" />
      </div>
      <Ic w={10} h={10} className="ml-[6px]"><path d="M0 5h10M5 0v10" stroke="#e6e6e6" /></Ic>
      <Fit w={31} className="ml-[16px]">100%</Fit>
    </div>
  );
}

const VS = "M23.150 2.587L18.210.210a1.494 1.494 0 0 0-1.705.290l-9.460 8.630-4.120-3.128a.999.999 0 0 0-1.276.057L.327 7.261A1 1 0 0 0 .326 8.740L3.899 12 .326 15.260a1 1 0 0 0 .001 1.479L1.650 17.940a.999.999 0 0 0 1.276.057l4.120-3.128 9.460 8.630a1.492 1.492 0 0 0 1.704.290l4.942-2.377A1.500 1.500 0 0 0 24 20.060V3.939a1.500 1.500 0 0 0-.850-1.352zm-5.146 14.861L10.826 12l7.178-5.448v10.896z";
function VsCode({ size }: { size: number }) {
  return (
    <svg width={size} height={size} viewBox="0 0 24 24" className="block">
      <path d={VS} fill="#1583cc" />
      <path d="M18 0.200l5.150 2.387A1.500 1.500 0 0 1 24 3.940v16.120a1.500 1.500 0 0 1-.850 1.352L18 23.800z" fill="#2aa5f0" />
    </svg>
  );
}

function Slot({ children, mark }: { children: React.ReactNode; mark?: boolean }) {
  return (
    <div className="flex h-[59px] w-[55px] shrink-0 flex-col items-center pt-[14px]">
      <div className="flex size-[30px] items-center justify-center">{children}</div>
      {mark && <div className="mt-[5px] h-[4px] w-[8px] rounded-full bg-[#9b9b9b]" />}
    </div>
  );
}

const P = ({ children }: { children: React.ReactNode }) => (
  <svg width="30" height="30" viewBox="0 0 30 30" className="block overflow-visible">{children}</svg>
);

function Weather() {
  return (
    <div className="relative ml-[26px] h-[36px] w-[36px]">
      <svg width="36" height="36" viewBox="0 0 36 36" className="block">
        <defs><linearGradient id="sun" x1="0" y1="0" x2="1" y2="1"><stop offset="0" stopColor="#f7c02c" /><stop offset="1" stopColor="#ef6a12" /></linearGradient></defs>
        <circle cx="15" cy="21" r="13" fill="url(#sun)" />
        <path d="M3 18a4 4 0 0 1 0-8 6 6 0 0 1 11-1 5 5 0 0 1 3 9z" fill="#9dc0f7" />
        <path d="M17 33a4 4 0 0 1-1-8 6 6 0 0 1 10-1 5 5 0 0 1 1 9z" fill="#9dc0f7" />
      </svg>
      <div className="absolute -top-[1px] left-[14px] flex size-[20px] items-center justify-center rounded-full bg-[#ff99a4] text-[14px] leading-none text-black">5</div>
    </div>
  );
}

function Sudoku() {
  return (
    <div className="relative ml-auto mr-[4px] flex h-[32px] w-[58px]">
      <div className="mt-[3px] grid h-[26px] w-[26px] grid-cols-3 grid-rows-3 gap-px border border-[#333] bg-[#333] text-center text-[8px] font-bold leading-[8px] text-black">
        {["2", "", "3", "1", "", "2", "", "", "1"].map((n, i) => <div key={i} className="bg-white">{n}</div>)}
      </div>
      <svg width="36" height="30" viewBox="0 0 36 30" className="absolute left-[24px] top-[8px] block">
        <path d="M3 6l4-4c3-1.500 9-1.500 13 2 3 3 3 8 7 13l-8 5c-4-3-6-9-9-10H7l-4-3z" fill="#dba983" />
        <path d="M8 4l7 1.500M6 9l8 0" stroke="#a8704c" strokeWidth="1" />
        <path d="M0 7.500l27-3v2.500L1 8.500z" fill="#f5a623" />
        <path d="M26 4.500l5-.5v2.500l-5 .5z" fill="#e85a6a" />
      </svg>
    </div>
  );
}

function Taskbar() {
  return (
    <div className="flex h-[60px] w-full shrink-0 items-center border-t border-[#444444] bg-[linear-gradient(90deg,#1e2422_0%,#22241f_25%,#23241e_45%,#28221a_58%,#241f1e_75%,#1f1f1f_100%)]">
      <div className="mb-[7px]"><Weather /></div>
      <svg width="30" height="30" viewBox="0 0 30 30" className="ml-[243px] block">
        <defs><linearGradient id="win" x1="0" y1="0" x2="1" y2="1"><stop offset="0" stopColor="#7fdcfb" /><stop offset="1" stopColor="#1193f3" /></linearGradient></defs>
        <path d="M1.500.500h12.700v14H.500v-13zM15.500.500h13.500l.5 1v13h-14zM.500 15.500h13.700v14H1.500l-1-1zM15.500 15.500h14v13l-.5 1H15.500z" fill="url(#win)" />
      </svg>
      <div className="ml-[16px] flex h-[40px] w-[275px] items-center rounded-full border border-[#565650] bg-[#3d3f3b]">
        <Ic w={18} h={20} className="ml-[14px]"><circle cx="8" cy="8" r="6.800" stroke="#e8e8e8" strokeWidth="1.900" /><path d="M13 13.500l4.500 5" stroke="#e8e8e8" strokeWidth="2" /></Ic>
        <Fit w={53} className="ml-[12px] text-[16px] leading-[22px] text-[#cfcfcf]">Search</Fit>
        <Sudoku />
      </div>
      <div className="ml-[2px] flex h-[59px]">
        <Slot><P>
          <rect x="0" y="10" width="22" height="18" rx="1.500" fill="#686868" />
          <rect x="8" y="1" width="22" height="20" rx="1.500" fill="#f2f2f2" />
          <path d="M8 10h14v11H9.500A1.500 1.500 0 0 1 8 19.500z" fill="#b5b5b5" />
        </P></Slot>
        <Slot><P><rect x="0" y="4.500" width="30" height="21" rx="5" fill="#fc0606" /><path d="M12 11l7.500 4-7.500 4z" fill="#fff" /></P></Slot>
        <Slot><CopilotLogo size={28} id="barCopilot" /></Slot>
        <Slot mark><P>
          <path d="M0 4a2 2 0 0 1 2-2h7l3.500 3.500V12H0z" fill="#d9980e" />
          <path d="M0 10l10-1 3-3.500h15.500A1.500 1.500 0 0 1 30 7v20a1.500 1.500 0 0 1-1.500 1.500h-27A1.500 1.500 0 0 1 0 27z" fill="#fcc935" />
          <path d="M5.500 28.500V24a3 3 0 0 1 3-3h13.500a3 3 0 0 1 3 3v4.500z" fill="#1374c8" />
          <path d="M9 24.500h13" stroke="#0b4f94" strokeWidth="1.500" />
        </P></Slot>
        <Slot><P>
          <defs>
            <linearGradient id="edgeA" x1="0" y1="0" x2="1" y2="0.300"><stop offset="0" stopColor="#2293dc" /><stop offset="0.550" stopColor="#35c0cf" /><stop offset="1" stopColor="#62d94e" /></linearGradient>
            <linearGradient id="edgeB" x1="0" y1="0" x2="0.700" y2="1"><stop offset="0" stopColor="#1580cf" /><stop offset="1" stopColor="#0d4fa0" /></linearGradient>
          </defs>
          <circle cx="15" cy="15" r="15" fill="url(#edgeB)" />
          <path d="M0 15C0 6 7 0 15 0s15 6 15 13c0 5-3.500 8-8 8-3 0-5-1-5-2.500s1.500-2 1.500-4.500c0-3-2.500-5.500-7-5.500C6 8.500 1.500 11 0 15z" fill="url(#edgeA)" />
          <path d="M12 15c0-2 1.500-3.500 3.500-3.500 2 0 3 1.500 3 3s-1.500 2-1.500 3.500c0 2.500 3 3.500 6 3 4-.5 7-3 7-3v4l-2 2c-3 2-6 2.500-9 1.500-4-1.500-7-5-7-10.500z" fill="#1c2a30" opacity="0.600" />
        </P></Slot>
        <Slot><P>
          <path d="M8 6V2.500A1 1 0 0 1 9 1.500h11a1 1 0 0 1 1 1V6" fill="none" stroke="#2ab4e8" strokeWidth="1.800" />
          <path d="M.500 6.500A1 1 0 0 1 1.500 5.500h26.500a1 1 0 0 1 1 1V25a5 5 0 0 1-5 5h-18.500a5 5 0 0 1-5-5z" fill="#f0f0f0" />
          <path d="M9.500 12h5v5h-5z" fill="#f25022" /><path d="M15.500 12h5v5h-5z" fill="#7fba00" />
          <path d="M9.500 18h5v5h-5z" fill="#00a4ef" /><path d="M15.500 18h5v5h-5z" fill="#ffb900" />
        </P></Slot>
        <Slot>
          <div className="flex size-[30px] flex-col items-center bg-white pt-[3px]">
            <Fit w={27} className="text-[9px] font-bold leading-[10px] text-black">amazon</Fit>
            <svg width="30" height="17" viewBox="0 0 30 17" className="block">
              <path d="M8 0c4 2 8 2 11-.5" stroke="#ff9900" strokeWidth="1.200" fill="none" />
              <path d="M1 5h5l4 11.500" stroke="#1d6fb0" strokeWidth="1.800" fill="none" />
              <path d="M8 7h22v9.500H11z" fill="#1d6fb0" />
              <path d="M9 9h21M10 12h20M11 15h19" stroke="#fff" strokeWidth="0.900" strokeDasharray="1.500 1.200" />
            </svg>
          </div>
        </Slot>
        <Slot>
          <div className="flex size-[30px] flex-col items-center bg-[#eeeeee]">
            <Fit w={16} className="h-[23px] text-[27px] font-bold leading-[19px] text-[#8a8a8a]">a</Fit>
            <div className="flex gap-[1.500px]">
              <span className="size-[4px] rounded-full bg-[#e81123]" /><span className="size-[4px] rounded-full bg-[#f7931e]" /><span className="size-[4px] rounded-full bg-[#2eb872]" /><span className="size-[4px] rounded-full bg-[#8a3fd1]" /><span className="size-[4px] rounded-full bg-[#1e88e5]" />
            </div>
          </div>
        </Slot>
        <Slot><P>
          <path d="M4 10L18 2l12 7v15a4 4 0 0 1-4 4H8a4 4 0 0 1-4-4z" fill="#1a7fd6" />
          <path d="M10 7l8-5 9 5.500L15 15z" fill="#37b3f0" />
          <path d="M15 16L28 7l2 2v5L16 22z" fill="#0a3f9c" />
          <path d="M15 20l15-8v12a4 4 0 0 1-4 4H12z" fill="#4ddcf8" />
          <rect x="0" y="8" width="15" height="15" rx="2" fill="#0f6cd0" />
          <circle cx="7.500" cy="15.500" r="3.700" stroke="#fff" strokeWidth="2" fill="none" />
        </P></Slot>
        <Slot><P><circle cx="15" cy="15" r="13.200" fill="#229ed9" /><path d="M6.500 15.500L22.500 9l-3 13.500-5-3.500-3 2.500v-4z" fill="#fff" /><path d="M11.500 17.500l8-6-6 7z" fill="#9fcbe8" /></P></Slot>
        <Slot><P>
          <path d="M13 2.500a12.700 12.700 0 1 1-1 25" fill="none" stroke="#43b02a" strokeWidth="4.600" />
          <path d="M13 2.500A12.700 12.700 0 0 0 9.500 26.500" fill="none" stroke="#43b02a" strokeWidth="3.800" strokeDasharray="2.500 1.300" />
        </P></Slot>
        <Slot>
          <div className="relative size-[30px]">
            <FaGithub className="size-[30px] text-[#24292e]" />
            <div className="absolute -bottom-px -right-px"><VsCode size={17} /></div>
          </div>
        </Slot>
        <Slot><BiLogoPostgresql className="size-[36px] overflow-visible stroke-[#e6edf2] stroke-[0.600] text-[#336791]" /></Slot>
        <div className="ml-px flex">
          <Slot mark><P>
            <path d="M15 15L2 7.500A15 15 0 0 1 28 7.500z" fill="#e33b2e" />
            <path d="M15 15L2 7.500A15 15 0 0 0 14 30l7.500-11.200z" fill="#2aa14c" />
            <path d="M15 15h0l6.500 3.700L14.500 30A15 15 0 0 0 28 7.500H15z" fill="#fcc31e" />
            <circle cx="15" cy="15" r="7.400" fill="#fff" /><circle cx="15" cy="15" r="5.800" fill="#2f7df6" />
          </P></Slot>
          <Slot mark><P>
            <path d="M15 0l7 7-7 7-7-7z" fill="#f7787c" /><path d="M7 8l7 7-7 7-7-7z" fill="#80b3ff" />
            <path d="M23 8l7 7-7 7-7-7z" fill="#87d36a" /><path d="M15 16l7 7-7 7-7-7z" fill="#ffe27a" />
            <path d="M10 3.500l5 5V23M15 9.500l6 6" stroke="#2a2020" strokeWidth="1.700" fill="none" />
            <circle cx="15" cy="9" r="2.300" fill="#2a2020" /><circle cx="21" cy="15" r="2.300" fill="#2a2020" /><circle cx="15" cy="21.500" r="2.300" fill="#2a2020" />
          </P></Slot>
          <Slot mark><VsCode size={30} /></Slot>
        </div>
      </div>
      <div className="ml-[2px] flex size-[50px] flex-col items-center rounded-[5px] border border-[#3b3736] bg-[#322e2d] pt-[9px]">
        <ExcelLogo size={30} />
        <div className="mt-[5px] h-[4px] w-[20px] shrink-0 rounded-full bg-[#4cc2ff]" />
      </div>
      <Ic w={14} h={8} className="ml-[88px]"><path d="M1 7.500L7 1.500l6 6" stroke="#fff" strokeWidth="1.900" /></Ic>
      <Ic w={21} h={18} className="ml-[22px]">
        <path d="M4 13.500a4 4 0 0 1 0-8 6 6 0 0 1 11-2 5 5 0 0 1 2 9z" fill="#8a8a8a" stroke="none" />
        <path d="M4 14a4 4 0 0 1 0-7.500c3-2 6 0 7 2.500v5z" fill="#ececec" stroke="none" />
        <circle cx="15" cy="12" r="5.700" fill="#8f8f8f" stroke="#222" strokeWidth="0.600" />
        <path d="M13.500 9.500v5M16.500 9.500v5" stroke="#fff" />
      </Ic>
      <Ic w={20} h={16} className="ml-[20px]">
        <path d="M.8 6.500C5.500.500 14.500.500 19.200 6.500M4 9.500c3-4 9-4 12 0M7 12.500c1.500-2 4.500-2 6 0" stroke="#fff" strokeWidth="1.700" />
        <circle cx="10" cy="14.300" r="1.700" fill="#fff" stroke="none" />
      </Ic>
      <Ic w={21} h={18} className="ml-[9px]">
        <path d="M1 6v6h3.500l5 4V2l-5 4zM12.500 6.500c1.300 1.500 1.300 3.500 0 5M15 4.500c2.200 2.500 2.200 6.500 0 9M17.500 2c3.300 4 3.300 10 0 14" stroke="#fff" strokeWidth="1.400" />
      </Ic>
      <Ic w={21} h={17} className="ml-[10px]">
        <path d="M7 3.500h8.500a2 2 0 0 1 2 2v7a2 2 0 0 1-2 2H3.500a2 2 0 0 1-2-2V11" stroke="#fff" />
        <path d="M8 6h7.500v6H4.500v-2l3-2z" fill="#fff" stroke="none" />
        <path d="M18.500 7h1.300v4h-1.300" stroke="#fff" fill="#fff" />
        <path d="M4 0L0 6h3l-1 5 5-6.500H4z" fill="#fff" stroke="none" />
      </Ic>
      <div className="-mt-[3px] ml-[19px] flex w-[70px] flex-col items-end text-[15px] leading-[20px]">
        <Fit w={54}>3:22 PM</Fit>
        <Fit w={70}>9/11/2025</Fit>
      </div>
    </div>
  );
}

export default function App() {
  return (
    <div className="flex h-[1080px] w-[1920px] flex-col overflow-hidden bg-[linear-gradient(90deg,#1a1b19_0%,#20211d_25%,#24201b_50%,#211a17_78%,#0f0e0b_100%)] font-['Noto_Sans'] text-white">
      <TitleBar />
      <MenuBar />
      <Ribbon />
      <FormulaBar />
      <Sheet />
      <SheetTabs />
      <StatusBar />
      <Taskbar />
    </div>
  );
}
